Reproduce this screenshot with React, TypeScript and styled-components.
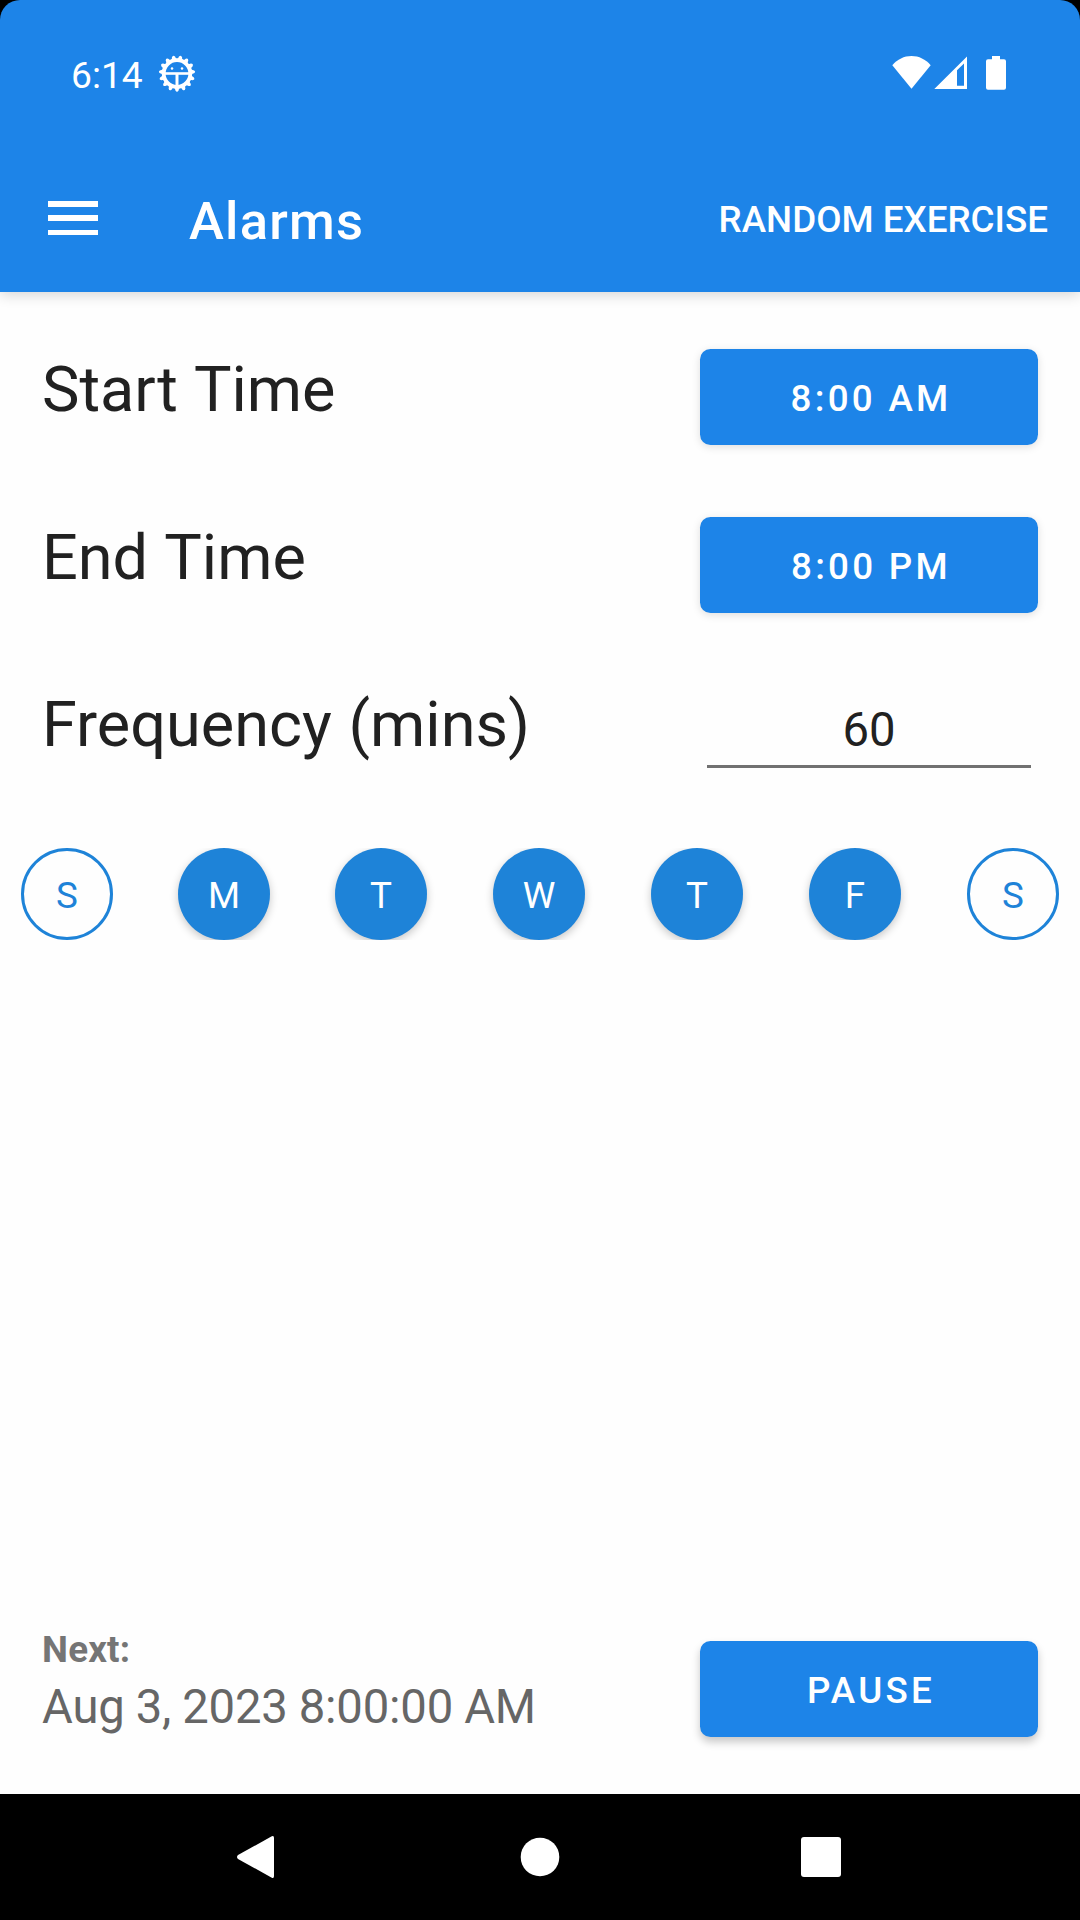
import React from 'react';
import styled, { createGlobalStyle, css } from 'styled-components';

const blue = '#1d84e8';
const dayBlue = '#1e83d8';

const GlobalStyle = createGlobalStyle`
  *, *::before, *::after { box-sizing: border-box; }
  html, body { margin: 0; padding: 0; background: #000; }
`;

const Screen = styled.div`
  display: flex;
  flex-direction: column;
  width: 1080px;
  height: 1920px;
  overflow: hidden;
  background: #000;
  font-family: Roboto, 'Liberation Sans', sans-serif;
`;

const Header = styled.header`
  display: flex;
  flex-direction: column;
  height: 292px;
  flex: none;
  z-index: 1;
  color: #fff;
  background: ${blue};
  border-radius: 20px 20px 0 0;
  box-shadow: 0 3px 14px rgba(0, 0, 0, 0.16);
`;

const StatusBar = styled.div`
  display: flex;
  align-items: center;
  justify-content: space-between;
  height: 145px;
  padding: 0 74px 0 71px;
`;

const StatusGroup = styled.div`
  display: flex;
  align-items: center;
  height: 44px;
`;

const Clock = styled.span`
  width: 87px;
  font-size: 37.2px;
  line-height: 44px;
  padding-top: 4px;
`;

const Toolbar = styled.div`
  display: flex;
  align-items: center;
  height: 147px;
  padding: 0 32px 0 48px;
`;

const MenuButton = styled.button`
  display: flex;
  flex-direction: column;
  justify-content: space-between;
  width: 50px;
  height: 34px;
  margin: 0 91px 1px 0;
  padding: 0;
  border: 0;
  background: none;
`;

const MenuBar = styled.span`
  height: 5.5px;
  background: #fff;
`;

const Title = styled.h1`
  flex: 1;
  margin: 0;
  padding-top: 5px;
  font-size: 52.5px;
  font-weight: 500;
  line-height: 62px;
  letter-spacing: 1.25px;
`;

const TextAction = styled.button`
  padding: 2px 0 0;
  border: 0;
  color: #fff;
  background: none;
  font: 500 36.75px/44px Roboto, sans-serif;
  white-space: nowrap;
`;

const Content = styled.main`
  display: flex;
  flex-direction: column;
  flex: 1;
  background: #fefefe;
`;

const Settings = styled.section`
  display: flex;
  flex-direction: column;
  gap: 72px;
  padding: 57px 42px 0;
`;

const SettingRow = styled.div`
  display: flex;
  justify-content: space-between;
  height: 96px;
`;

const SettingLabel = styled.label`
  color: #212121;
  font-size: 63px;
  line-height: 82px;
  word-spacing: 1.7px;

  &[for] {
    line-height: 80px;
    word-spacing: 1.2px;
  }
`;

const Button = styled.button<{ $raised?: boolean }>`
  width: 338px;
  height: 96px;
  padding: 3px 0 0 4px;
  border: 0;
  border-radius: 10.5px;
  color: #fff;
  background: ${blue};
  font: 500 36.75px/44px Roboto, sans-serif;
  letter-spacing: 3.28px;
  box-shadow: 0 2px 8px rgba(0, 0, 0, 0.13);
  ${(p) =>
    p.$raised &&
    css`
      box-shadow: 0 5px 9px rgba(0, 0, 0, 0.22);
    `}
`;

const NumberField = styled.input`
  width: 324px;
  height: 83px;
  margin-right: 7px;
  padding: 9px 0 0;
  border: 0;
  border-bottom: 3px solid #717171;
  border-radius: 0;
  outline: 0;
  color: #212121;
  background: none;
  font: 400 47.25px/56px Roboto, sans-serif;
  text-align: center;
`;

const DayRow = styled.div`
  display: grid;
  grid-template-columns: 157px 157px 158px 158px 158px 158px 92px;
  height: 92px;
  margin-top: 67px;
  padding: 0 21px;
  overflow: hidden;
`;

const Day = styled.button<{ $on: boolean }>`
  width: 92px;
  height: 92px;
  padding: 3px 0 0;
  border: ${(p) => (p.$on ? '0' : `3px solid ${dayBlue}`)};
  border-radius: 50%;
  color: ${(p) => (p.$on ? '#fff' : dayBlue)};
  background: ${(p) => (p.$on ? dayBlue : 'transparent')};
  box-shadow: ${(p) => (p.$on ? '0 3px 9px rgba(0, 0, 0, 0.22)' : 'none')};
  font: 400 36.75px/44px Roboto, sans-serif;
`;

const Footer = styled.footer`
  display: flex;
  justify-content: space-between;
  align-items: flex-start;
  height: 153px;
  margin-top: auto;
  padding: 0 42px;
`;

const NextAlarm = styled.div`
  display: flex;
  flex-direction: column;
  margin-top: -13px;
`;

const NextLabel = styled.strong`
  color: #757575;
  font-size: 36.75px;
  font-weight: 700;
  line-height: 44px;
  letter-spacing: 0.2px;
`;

const NextTime = styled.span`
  margin-top: 7px;
  color: #666;
  font-size: 47.25px;
  line-height: 56px;
  letter-spacing: -0.18px;
  word-spacing: -0.5px;
`;

const NavBar = styled.nav`
  display: flex;
  align-items: center;
  justify-content: center;
  gap: 241px;
  height: 126px;
  flex: none;
  background: #000;
`;

const NavIcon = styled.svg`
  width: 40px;
  height: 44px;
  overflow: visible;
  fill: #fff;
`;

const teeth = Array.from({ length: 15 }, (_, i) => i * 24);

function SunGearIcon() {
  return (
    <svg width="38" height="38" viewBox="-19 -19.5 38 38">
      {teeth.map((a) => (
        <path key={a} transform={`rotate(${a + 12})`} d="M-3.2 -14 Q-1.6 -15.2 -1.6 -17 Q0 -19.4 1.6 -17 Q1.6 -15.2 3.2 -14 Z" fill="#fff" />
      ))}
      <circle r="13.3" fill="none" stroke="#fff" strokeWidth="3.8" />
      <path d="M-12 0H12" stroke="#fff" strokeWidth="2.6" />
      <path d="M0 0V13" stroke="#fff" strokeWidth="3" />
      <circle cx="-5" cy="-5" r="1.25" fill="#fff" />
      <circle cx="5" cy="-5" r="1.25" fill="#fff" />
    </svg>
  );
}

function SystemIcons() {
  return (
    <svg width="114" height="34" viewBox="0 0 114 34" fill="#fff">
      <path d="M19.5 32.7 L0.3 9.2 C5.5 3.3 12 0 19.5 0 S33.5 3.3 38.7 9.2 Z" />
      <path fillRule="evenodd" d="M42.3 33 L75 0.6 V33 Z M65 14.3 V29.7 H72 V7.4 Z" />
      <path d="M100 0 H108 V3.2 H112 Q114 3.2 114 5.2 V31.7 Q114 33.7 112 33.7 H96 Q94 33.7 94 31.7 V5.2 Q94 3.2 96 3.2 H100 Z" />
    </svg>
  );
}

const days = [
  { label: 'S', on: false },
  { label: 'M', on: true },
  { label: 'T', on: true },
  { label: 'W', on: true },
  { label: 'T', on: true },
  { label: 'F', on: true },
  { label: 'S', on: false },
];

export default function App() {
  return (
    <Screen>
      <GlobalStyle />
      <Header>
        <StatusBar>
          <StatusGroup>
            <Clock>6:14</Clock>
            <SunGearIcon />
          </StatusGroup>
          <StatusGroup>
            <SystemIcons />
          </StatusGroup>
        </StatusBar>
        <Toolbar>
          <MenuButton aria-label="Menu">
            <MenuBar />
            <MenuBar />
            <MenuBar />
          </MenuButton>
          <Title>Alarms</Title>
          <TextAction>RANDOM EXERCISE</TextAction>
        </Toolbar>
      </Header>
      <Content>
        <Settings>
          <SettingRow>
            <SettingLabel>Start Time</SettingLabel>
            <Button>8:00 AM</Button>
          </SettingRow>
          <SettingRow>
            <SettingLabel>End Time</SettingLabel>
            <Button>8:00 PM</Button>
          </SettingRow>
          <SettingRow>
            <SettingLabel htmlFor="frequency">Frequency (mins)</SettingLabel>
            <NumberField id="frequency" defaultValue="60" />
          </SettingRow>
        </Settings>
        <DayRow>
          {days.map((d, i) => (
            <Day key={i} $on={d.on}>
              {d.label}
            </Day>
          ))}
        </DayRow>
        <Footer>
          <NextAlarm>
            <NextLabel>Next:</NextLabel>
            <NextTime>Aug 3, 2023 8:00:00 AM</NextTime>
          </NextAlarm>
          <Button $raised>PAUSE</Button>
        </Footer>
      </Content>
      <NavBar>
        <NavIcon viewBox="0 0 40 44">
          <path d="M32.8 1.3 Q35 0.2 35 3 V41 Q35 43.8 32.8 42.7 L-1 24 Q-3 22 -1 20 Z" />
        </NavIcon>
        <NavIcon viewBox="0 0 40 44">
          <circle cx="20" cy="22" r="19.3" />
        </NavIcon>
        <NavIcon viewBox="0 0 40 44">
          <rect x="0" y="2" width="40" height="40" rx="3" />
        </NavIcon>
      </NavBar>
    </Screen>
  );
}
